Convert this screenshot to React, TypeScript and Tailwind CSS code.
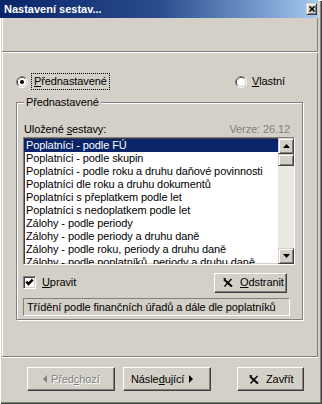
import React from "react";

const raised =
  "border border-t-white border-l-white border-r-[#404040] border-b-[#404040] shadow-[inset_-1px_-1px_0_#808080]";
const sbtn =
  "border border-t-[#d4d0c8] border-l-[#d4d0c8] border-r-[#404040] border-b-[#404040] shadow-[inset_1px_1px_0_#ffffff,inset_-1px_-1px_0_#808080] bg-[#d4d0c8]";
const sunken2 =
  "border border-t-[#808080] border-l-[#808080] border-b-white border-r-white shadow-[inset_1px_1px_0_#404040,inset_-1px_-1px_0_#d4d0c8]";

function Radio({ checked }: { checked?: boolean }) {
  return (
    <svg width="12" height="12" viewBox="0 0 12 12" className="shrink-0">
      <path d="M2.11 9.89A5.5 5.5 0 0 1 9.89 2.11" fill="none" stroke="#808080" />
      <path d="M9.89 2.11A5.5 5.5 0 0 1 2.11 9.89" fill="none" stroke="#ffffff" />
      <path d="M2.82 9.18A4.5 4.5 0 0 1 9.18 2.82" fill="none" stroke="#404040" />
      <path d="M9.18 2.82A4.5 4.5 0 0 1 2.82 9.18" fill="none" stroke="#d4d0c8" />
      <circle cx="6" cy="6" r="4" fill="#ffffff" />
      {checked && <circle cx="6" cy="6" r="2" fill="#000000" />}
    </svg>
  );
}

function XIcon() {
  return (
    <svg width="10" height="9" viewBox="0 0 10 9" className="shrink-0">
      <path d="M1 1.5 C3 3 6 6 9 8.5" fill="none" stroke="#000" strokeWidth="2" />
      <path d="M8.5 1 L1.5 8.5" fill="none" stroke="#000" strokeWidth="1.3" />
      <path d="M0.5 0.8 L3 0.8" fill="none" stroke="#000" strokeWidth="1.2" />
    </svg>
  );
}

const items = [
  "Poplatníci - podle FÚ",
  "Poplatníci - podle skupin",
  "Poplatníci - podle roku a druhu daňové povinnosti",
  "Poplatníci dle roku a druhu dokumentů",
  "Poplatníci s přeplatkem podle let",
  "Poplatníci s nedoplatkem podle let",
  "Zálohy - podle periody",
  "Zálohy - podle periody a druhu daně",
  "Zálohy - podle roku, periody a druhu daně",
  "Zálohy - podle poplatníků, periody a druhu daně",
];

export default function App() {
  return (
    <div className="w-[322px] h-[404px] bg-[#d4d0c8] flex flex-col overflow-hidden font-['Liberation_Sans',Arial,sans-serif] text-[11px] leading-[13px] tracking-[-0.1px] text-black shadow-[inset_1px_1px_0_#ffffff,inset_-1px_-1px_0_#404040,inset_-2px_-2px_0_#808080]">
      {/* title bar */}
      <div className="h-[18px] w-[318px] shrink-0 flex items-center justify-between bg-linear-to-r from-[#0a246a] via-[#2a4c8e] to-[#a6caf0] pl-[4px] pr-[1px]">
        <span className="text-white font-bold text-[11px] leading-[13px] tracking-normal">Nastavení sestav...</span>
        <div className={"w-[11px] h-[12px] flex items-center justify-center " + sbtn}>
          <svg width="6" height="6" viewBox="0 0 6 6">
            <path d="M0.5 0.5 L5.5 5.5 M5.5 0.5 L0.5 5.5" stroke="#000" strokeWidth="1.5" />
          </svg>
        </div>
      </div>

      <div className="flex-1 flex flex-col pl-[2px] pr-[4px] pb-[4px]">
        {/* header panel */}
        <div className="h-[33px] shrink-0 border-l border-l-white border-r border-r-[#808080]" />
        <div className="h-[2px] shrink-0 border-t border-t-[#808080] border-b border-b-white" />

        {/* content panel */}
        <div className="h-[303px] shrink-0 flex flex-col border-l border-l-white border-r border-r-[#808080]">
          <div className="mt-[20px] h-[17px] flex items-center pl-[13px]">
            <div className="w-[219px] flex items-center">
              <Radio checked />
              <span className="ml-[3px] h-[17px] px-[2px] flex items-center border border-dotted border-black">
                <span><span className="underline">P</span>řednastavené</span>
              </span>
            </div>
            <Radio />
            <span className="ml-[5px]"><span className="underline">V</span>lastní</span>
          </div>

          <fieldset className="mt-[6px] ml-[13px] w-[287px] border border-[#808080] shadow-[inset_1px_1px_0_#ffffff,1px_1px_0_#ffffff] pl-[6px] pb-[3px]">
            <legend className="ml-[1px] px-[2px] bg-[#d4d0c8] leading-[13px]">Přednastavené</legend>
            <div className="mt-[14px] w-[267px] pl-[1px] flex justify-between">
              <span>Uložené <span className="underline">s</span>estavy:</span>
              <span className="text-[#808080]">Verze: 26.12</span>
            </div>
            <div className={"mt-[1px] w-[272px] h-[128px] flex bg-white " + sunken2}>
              <div className="flex-1 overflow-hidden pt-[1px]">
                {items.map((t, i) => (
                  <div
                    key={t}
                    className={
                      "h-[13px] pl-[2px] whitespace-nowrap overflow-hidden " +
                      (i === 0 ? "bg-[#0a246a] text-white" : "")
                    }
                  >
                    {t}
                  </div>
                ))}
              </div>
              <div className="w-[16px] flex flex-col bg-[#ebe9e4]">
                <div className={"h-[16px] flex items-center justify-center " + sbtn}>
                  <svg width="7" height="4" viewBox="0 0 7 4"><path d="M3.5 0 L7 4 L0 4 Z" fill="#000" /></svg>
                </div>
                <div className={"h-[12px] " + sbtn} />
                <div className="flex-1" />
                <div className={"h-[16px] flex items-center justify-center " + sbtn}>
                  <svg width="7" height="4" viewBox="0 0 7 4"><path d="M0 0 L7 0 L3.5 4 Z" fill="#000" /></svg>
                </div>
              </div>
            </div>

            <div className="mt-[7px] w-[264px] h-[21px] flex items-center justify-between">
              <div className="flex items-center">
                <div className={"w-[13px] h-[13px] bg-white flex items-center justify-center " + sunken2}>
                  <svg width="9" height="9" viewBox="0 0 9 9">
                    <path d="M1.3 3.6 L3.5 5.8 L7.7 1.6" fill="none" stroke="#000" strokeWidth="2.6" />
                  </svg>
                </div>
                <span className="ml-[6px]"><span className="underline">U</span>pravit</span>
              </div>
              <div className={"w-[73px] h-[20px] flex items-center pl-[8px] " + raised}>
                <XIcon />
                <span className="ml-[7px]"><span className="underline">O</span>dstranit</span>
              </div>
            </div>

            <div className="mt-[5px] w-[267px] h-[18px] flex items-center pl-[3px] border border-t-[#808080] border-l-[#808080] border-b-white border-r-white whitespace-nowrap overflow-hidden">
              Třídění podle finančních úřadů a dále dle poplatníků
            </div>
          </fieldset>
        </div>

        <div className="h-[2px] shrink-0 border-t border-t-[#808080] border-b border-b-white" />

        {/* bottom bar */}
        <div className="flex-1 flex items-start pt-[9px] pl-[25px]">
          <div className={"w-[88px] h-[24px] flex items-center pl-[15px] text-[#808080] " + raised}>
            <svg width="5" height="8" viewBox="0 0 5 8" className="shrink-0"><path d="M4 0 L4 8 L0 4 Z" fill="#808080" /></svg>
            <span className="ml-[3px] [text-shadow:1px_1px_0_#ffffff]">Před<span className="underline">c</span>hozí</span>
          </div>
          <div className={"ml-[8px] w-[88px] h-[24px] flex items-center pl-[7px] " + raised}>
            <span>Násle<span className="underline">d</span>ující</span>
            <svg width="5" height="8" viewBox="0 0 5 8" className="ml-[4px] shrink-0"><path d="M1 0 L5 4 L1 8 Z" fill="#000" /></svg>
          </div>
          <div className={"ml-[26px] w-[67px] h-[24px] flex items-center pl-[11px] " + raised}>
            <XIcon />
            <span className="ml-[7px]">Zavřít</span>
          </div>
        </div>
      </div>
    </div>
  );
}
